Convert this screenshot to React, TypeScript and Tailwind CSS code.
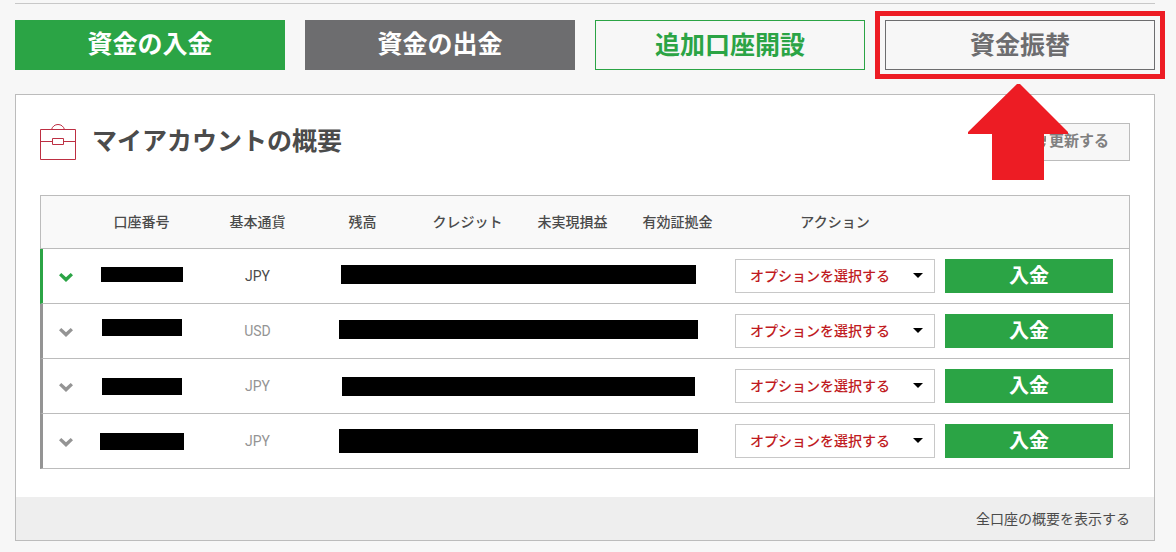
import { useState } from 'react'
import { FaSync } from 'react-icons/fa'

type Account = {
  id: number
  currency: string
  active: boolean
  numberMask: string
  amountMask: string
}

const accounts: Account[] = [
  { id: 1, currency: 'JPY', active: true, numberMask: 'mb-1 h-[15px] w-[82px]', amountMask: 'mb-1 h-[19px] w-[355px]' },
  { id: 2, currency: 'USD', active: false, numberMask: 'mb-2 h-[17px] w-20', amountMask: 'mb-1 h-[19px] w-[359px]' },
  { id: 3, currency: 'JPY', active: false, numberMask: 'h-[17px] w-20', amountMask: 'h-[19px] w-[353px]' },
  { id: 4, currency: 'JPY', active: false, numberMask: 'h-[17px] w-[84px]', amountMask: 'h-6 w-[359px]' },
]

const actionClass = 'h-[50px] w-full cursor-pointer text-[25px] leading-[50px] font-bold'

function BriefcaseIcon() {
  return (
    <svg width="36" height="36" viewBox="0 0 36 36" fill="none" stroke="#bd2f42" aria-hidden="true">
      <path d="M.5 5.5h35v30H.5z" />
      <path d="M11.500 5.500C12.500 2.300 15 .5 18 .5s5.500 1.800 6.500 5" />
      <path d="M.5 17.500h12M23.500 17.500h12M12.500 14.500h11v6h-11z" />
    </svg>
  )
}

function ChevronIcon() {
  return (
    <svg width="14" height="12" viewBox="0 0 14 12" fill="currentColor" aria-hidden="true">
      <path d="M0 5.200 2.300 3 7 7.200 11.700 3 14 5.200 7 12z" />
    </svg>
  )
}

function AccountRow({ account }: { account: Account }) {
  const [option, setOption] = useState('')
  const cell = 'h-[55px] border-b border-[#bcbcbc] p-0 text-center'

  return (
    <tr className={account.active ? 'text-[#4b4b4b]' : 'text-[#949494]'}>
      <td
        className={`${cell} border-l-[3px] pl-3 ${account.active ? 'border-l-[#2ba445]' : 'border-l-[#949494]'}`}
      >
        <button
          aria-label="口座の詳細"
          className={`block cursor-pointer px-1 ${account.active ? 'text-[#2ba445]' : 'text-[#949494]'}`}
        >
          <ChevronIcon />
        </button>
      </td>
      <td className={cell}>
        <div className={`mx-auto bg-black ${account.numberMask}`} />
      </td>
      <td className={cell}>{account.currency}</td>
      <td colSpan={4} className={`${cell} pr-1`}>
        <div className={`mx-auto bg-black ${account.amountMask}`} />
      </td>
      <td className={`${cell} px-[5px]`}>
        <div className="relative">
          <select
            aria-label="アクション"
            value={option}
            onChange={(e) => setOption(e.target.value)}
            className="block h-[34px] w-full cursor-pointer appearance-none border border-[#c8c8c8] bg-white pr-8 pl-[14px] text-sm font-medium text-[#c01b22]"
          >
            <option value="">オプションを選択する</option>
          </select>
          <svg
            width="10"
            height="5"
            viewBox="0 0 10 5"
            className="pointer-events-none absolute top-[14px] right-3"
            aria-hidden="true"
          >
            <path d="M0 0h10L5 5z" fill="#000" />
          </svg>
        </div>
      </td>
      <td className={`${cell} border-r pr-4 pl-[5px]`}>
        <button className="block h-[34px] w-full cursor-pointer bg-[#2ba445] text-xl leading-[34px] font-bold text-white">
          入金
        </button>
      </td>
    </tr>
  )
}

export default function App() {
  const head = 'h-[54px] border-y border-[#bcbcbc] bg-[#f9f9f9] p-0 font-medium'

  return (
    <div className="min-h-screen bg-[#f7f7f7] pt-[3px] pr-[21px] pb-[11px] pl-[15px] font-[Roboto,'Noto_Sans_CJK_JP',sans-serif] text-sm text-[#4b4b4b]">
      <nav className="grid grid-cols-4 gap-5 border-t border-[#c8c8c8] pt-4">
        <button className={`${actionClass} bg-[#2ba445] text-white`}>資金の入金</button>
        <button className={`${actionClass} bg-[#6d6d6f] text-white`}>資金の出金</button>
        <button className={`${actionClass} border border-[#2ba445] leading-[48px] text-[#2ba445]`}>
          追加口座開設
        </button>
        <div className="relative">
          <button className={`${actionClass} border border-[#6d6d6f] leading-[48px] text-[#6d6d6f]`}>資金振替</button>
          <div className="pointer-events-none absolute -inset-x-[10px] -inset-y-[9px] border-[5px] border-[#ed1c24]" />
          <svg
            width="100"
            height="96"
            viewBox="0 0 100 96"
            className="pointer-events-none absolute top-16 left-[83px] z-10"
            aria-hidden="true"
          >
            <path d="M49 0h3l48 48v2H76v46H24V50H0v-2z" fill="#ed1c24" />
          </svg>
        </div>
      </nav>

      <section className="mt-6 border border-[#bcbcbc] bg-white">
        <div className="px-6 pt-7 pb-7">
          <header className="flex items-center justify-between">
            <div className="flex items-center gap-4">
              <BriefcaseIcon />
              <h1 className="text-[25px] leading-[38px] font-bold">マイアカウントの概要</h1>
            </div>
            <button className="flex h-[38px] cursor-pointer items-center gap-[3px] border border-[#bcbcbc] bg-[#f7f7f7] px-5 text-[15px] font-bold text-[#808080]">
              <FaSync size={13} />
              更新する
            </button>
          </header>

          <table className="mt-[34px] w-full table-fixed border-separate border-spacing-0">
            <colgroup>
              <col className="w-[38px]" />
              <col className="w-[127px]" />
              <col className="w-[105px]" />
              <col className="w-[105px]" />
              <col className="w-[105px]" />
              <col className="w-[105px]" />
              <col className="w-[105px]" />
              <col className="w-[210px]" />
              <col className="w-[190px]" />
            </colgroup>
            <thead>
              <tr>
                <td className={`${head} border-l`} />
                <th className={head}>口座番号</th>
                <th className={head}>基本通貨</th>
                <th className={head}>残高</th>
                <th className={head}>クレジット</th>
                <th className={head}>未実現損益</th>
                <th className={head}>有効証拠金</th>
                <th className={head}>アクション</th>
                <td className={`${head} border-r`} />
              </tr>
            </thead>
            <tbody>
              {accounts.map((account) => (
                <AccountRow key={account.id} account={account} />
              ))}
            </tbody>
          </table>
        </div>

        <footer className="flex h-[43px] items-center justify-end bg-[#eeeeee] px-6">
          <a href="#accounts" className="hover:underline">
            全口座の概要を表示する
          </a>
        </footer>
      </section>
    </div>
  )
}
